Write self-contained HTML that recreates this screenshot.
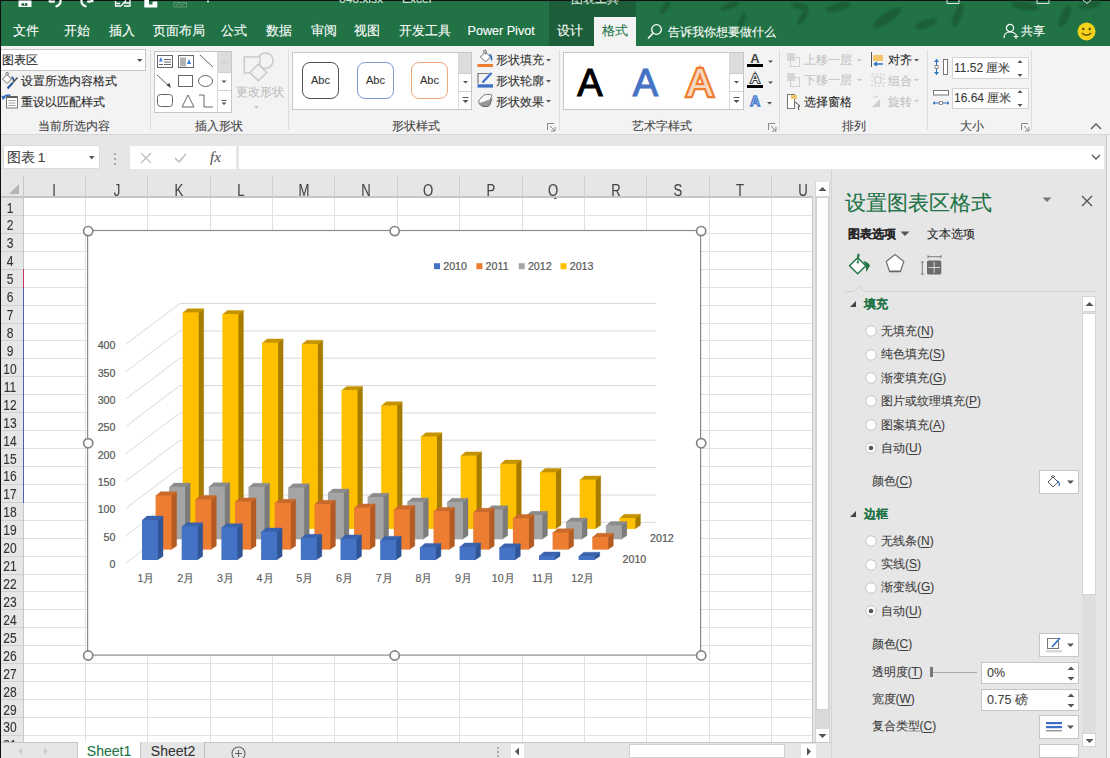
<!DOCTYPE html>
<html><head><meta charset="utf-8"><style>
html,body{margin:0;padding:0;width:1110px;height:758px;overflow:hidden;background:#fff;}
body{position:relative;font-family:"Liberation Sans",sans-serif;}
.r{position:absolute;}
.t{position:absolute;white-space:nowrap;-webkit-text-stroke:0.1px currentColor;}
u{text-decoration-thickness:1px;text-underline-offset:2px;}
</style></head><body>
<div class="r" style="left:0px;top:0px;width:1110px;height:46px;background:#217346"></div>
<div class="r" style="left:549px;top:0px;width:87px;height:46px;background:#1d5e3a"></div>
<div class="r" style="left:594px;top:17px;width:42px;height:30px;background:#f3f3f3"></div>
<div class="r" style="left:0px;top:0px;width:1110px;height:1px;background:#111"></div>
<svg class="r" style="left:0;top:0" width="240" height="12"><path d="M18.5 0.5 H31.5 V7 H18.5z" fill="#fff"/><rect x="21.5" y="3.3" width="6" height="2.4" fill="#1d5e3a"/><rect x="24" y="3.3" width="1" height="1.6" fill="#fff"/><g fill="none" stroke="#fff" stroke-width="2.2" stroke-linecap="round"><path d="M49.5 1.3 Q53 2 54 1.5"/><path d="M60.5 0.5 Q61 4.5 56.5 6.3"/><path d="M81.5 0.5 Q81 4.5 85.5 6.3"/><path d="M88 1.5 Q90 1.8 92.5 1"/></g><g fill="none" stroke="#fff" stroke-width="1.3"><path d="M115.5 1 V6 H121 M115.5 3.5 H120 M121 6 L126 0.5 M124 3 H130 M124 6 H130 V0"/></g><path d="M144.3 0 H149 V4.5 H152.5 V1.5 H157.3 V7.5 H144.3z" fill="#fff"/><rect x="174" y="2.5" width="12.5" height="4.5" fill="none" stroke="#5e9873" stroke-width="1"/><path d="M176 6 L179 3.5 L182 5.5 L185 3" fill="none" stroke="#5e9873"/><circle cx="208" cy="1.5" r="1" fill="#fff"/></svg>
<div class="t" style="left:339px;top:-9.0px;font-size:12px;line-height:17px;color:#cfe3d6;font-weight:normal;">046.xlsx</div>
<div class="t" style="left:402px;top:-9.0px;font-size:12px;line-height:17px;color:#cfe3d6;font-weight:normal;">Excel</div>
<div class="t" style="left:571px;top:-9.5px;font-size:12px;line-height:17px;color:#cfe3d6;font-weight:normal;">图表工具</div>
<svg class="r" style="left:0;top:0" width="1110" height="46"><defs><filter id="bl"><feGaussianBlur stdDeviation="1.2"/></filter></defs><g fill="#1a5c36" opacity="0.9" filter="url(#bl)"><ellipse cx="803" cy="17" rx="9" ry="3" transform="rotate(-60 803 17)"/><ellipse cx="838" cy="7" rx="13" ry="4" transform="rotate(-15 838 7)"/><ellipse cx="887" cy="18" rx="17" ry="5" transform="rotate(-35 887 18)"/><ellipse cx="926" cy="24" rx="12" ry="4" transform="rotate(-20 926 24)"/><ellipse cx="958" cy="15" rx="12" ry="4" transform="rotate(-70 958 15)"/><ellipse cx="1025" cy="6" rx="14" ry="4" transform="rotate(10 1025 6)"/><ellipse cx="1065" cy="16" rx="12" ry="4" transform="rotate(-65 1065 16)"/><ellipse cx="1090" cy="5" rx="12" ry="4" transform="rotate(-10 1090 5)"/><ellipse cx="665" cy="8" rx="8" ry="3" transform="rotate(-50 665 8)"/><ellipse cx="730" cy="6" rx="10" ry="3" transform="rotate(-20 730 6)"/><ellipse cx="742" cy="20" rx="8" ry="3" transform="rotate(-70 742 20)"/><ellipse cx="800" cy="6" rx="9" ry="3" transform="rotate(15 800 6)"/></g><g stroke="#d8e6dc" stroke-width="1" fill="none"><path d="M947 0 V3.5 H959 V0"/><path d="M1037 0 V3.5 H1049 V0"/><path d="M1083 0 L1087 3.5 L1091 0"/></g></svg>
<div class="t" style="left:13px;top:22.2px;font-size:12.6px;line-height:18px;color:#ffffff;font-weight:normal;">文件</div>
<div class="t" style="left:64px;top:22.2px;font-size:12.6px;line-height:18px;color:#ffffff;font-weight:normal;">开始</div>
<div class="t" style="left:109px;top:22.2px;font-size:12.6px;line-height:18px;color:#ffffff;font-weight:normal;">插入</div>
<div class="t" style="left:153px;top:22.2px;font-size:12.6px;line-height:18px;color:#ffffff;font-weight:normal;">页面布局</div>
<div class="t" style="left:221px;top:22.2px;font-size:12.6px;line-height:18px;color:#ffffff;font-weight:normal;">公式</div>
<div class="t" style="left:266px;top:22.2px;font-size:12.6px;line-height:18px;color:#ffffff;font-weight:normal;">数据</div>
<div class="t" style="left:310.5px;top:22.2px;font-size:12.6px;line-height:18px;color:#ffffff;font-weight:normal;">审阅</div>
<div class="t" style="left:354px;top:22.2px;font-size:12.6px;line-height:18px;color:#ffffff;font-weight:normal;">视图</div>
<div class="t" style="left:399px;top:22.2px;font-size:12.6px;line-height:18px;color:#ffffff;font-weight:normal;">开发工具</div>
<div class="t" style="left:467.5px;top:22.2px;font-size:12.6px;line-height:18px;color:#ffffff;font-weight:normal;">Power Pivot</div>
<div class="t" style="left:557px;top:22.2px;font-size:12.6px;line-height:18px;color:#ffffff;font-weight:normal;">设计</div>
<div class="t" style="left:602px;top:22.2px;font-size:12.6px;line-height:18px;color:#217346;font-weight:normal;">格式</div>
<svg class="r" style="left:646px;top:23px" width="18" height="18"><circle cx="10.5" cy="6.5" r="4.8" fill="none" stroke="#fff" stroke-width="1.3"/><path d="M7.2 10 L2 15.5" stroke="#fff" stroke-width="1.5"/></svg>
<div class="t" style="left:668px;top:23.5px;font-size:11.6px;line-height:16px;color:#ffffff;font-weight:normal;">告诉我你想要做什么</div>
<svg class="r" style="left:1003px;top:23px" width="18" height="17"><circle cx="7" cy="5" r="3.6" fill="none" stroke="#fff" stroke-width="1.2"/><path d="M1 15 Q1 9 7 9 Q11 9 12.5 11" fill="none" stroke="#fff" stroke-width="1.2"/><path d="M13 11 v5 M10.5 13.5 h5" stroke="#fff" stroke-width="1.2"/></svg>
<div class="t" style="left:1021px;top:23.0px;font-size:12px;line-height:17px;color:#ffffff;font-weight:normal;">共享</div>
<svg class="r" style="left:1076px;top:21px" width="21" height="21"><circle cx="10.5" cy="10.5" r="9" fill="#f5d21a"/><circle cx="7.3" cy="8" r="1.2" fill="#5a4a00"/><circle cx="13.7" cy="8" r="1.2" fill="#5a4a00"/><path d="M5.8 12 Q10.5 16.5 15.2 12" fill="none" stroke="#5a4a00" stroke-width="1.2"/></svg>
<div class="r" style="left:0px;top:46px;width:1110px;height:89px;background:#f3f3f3"></div>
<div class="r" style="left:0px;top:134px;width:1110px;height:1px;background:#d6d6d6"></div>
<div class="r" style="left:150px;top:50px;width:1px;height:80px;background:#dcdcdc"></div>
<div class="r" style="left:288px;top:50px;width:1px;height:80px;background:#dcdcdc"></div>
<div class="r" style="left:559px;top:50px;width:1px;height:80px;background:#dcdcdc"></div>
<div class="r" style="left:779px;top:50px;width:1px;height:80px;background:#dcdcdc"></div>
<div class="r" style="left:927px;top:50px;width:1px;height:80px;background:#dcdcdc"></div>
<div class="r" style="left:1031px;top:50px;width:1px;height:80px;background:#dcdcdc"></div>
<div class="r" style="left:0px;top:49px;width:146px;height:22px;background:#fff;border:1px solid #c6c6c6;box-sizing:border-box"></div>
<div class="t" style="left:2px;top:51.7px;font-size:12px;line-height:17px;color:#262626;font-weight:normal;">图表区</div>
<svg class="r" style="left:137px;top:59px" width="7" height="4"><path d="M0 0h5.5l-2.75 3z" fill="#555"/></svg>
<svg class="r" style="left:0px;top:70px" width="20" height="20"><path d="M2.5 9 l4.5 -4.5 l4.5 4.5 l-4.5 4.5z" fill="#fff" stroke="#666" stroke-width="1"/><path d="M5.5 4.5 q0.5 -3 2.5 -2 q1 1 -0.5 3" fill="none" stroke="#666" stroke-width="0.9"/><path d="M11.5 7 q2.5 1 2 4" fill="none" stroke="#2f5aa0" stroke-width="1.6"/><path d="M7.5 18.5 L12.5 13" stroke="#2f5aa0" stroke-width="2.2"/><path d="M12.5 13 L17.5 7.5" stroke="#555" stroke-width="1.6"/></svg>
<div class="t" style="left:21px;top:73.3px;font-size:12px;line-height:17px;color:#262626;font-weight:normal;">设置所选内容格式</div>
<svg class="r" style="left:0px;top:93px" width="20" height="18"><rect x="6.5" y="3.5" width="11" height="11.5" fill="#fff" stroke="#777"/><rect x="7" y="3.5" width="10" height="1.5" fill="#555"/><path d="M8.5 7.5h7M8.5 10h7M8.5 12.5h7" stroke="#999" stroke-width="0.9"/><path d="M10.5 2.5 q-3 -1.5 -7 1.5" fill="none" stroke="#2f6fc0" stroke-width="1.6"/><path d="M1.5 2.5 l1 4.5 l3.5 -2.5z" fill="#2f6fc0"/></svg>
<div class="t" style="left:21px;top:94.2px;font-size:12px;line-height:17px;color:#262626;font-weight:normal;">重设以匹配样式</div>
<div class="t" style="left:-76.5px;width:300px;text-align:center;top:118.1px;font-size:12px;line-height:17px;color:#444444;font-weight:normal;">当前所选内容</div>
<div class="r" style="left:154px;top:51px;width:78px;height:62px;background:#fff;border:1px solid #c6c6c6;box-sizing:border-box"></div>
<div class="r" style="left:217px;top:52px;width:14px;height:21px;background:#dcdcdc"></div>
<div class="r" style="left:217px;top:72px;width:14px;height:1px;background:#d0d0d0"></div>
<div class="r" style="left:217px;top:90px;width:14px;height:1px;background:#d0d0d0"></div>
<div class="r" style="left:217px;top:52px;width:1px;height:60px;background:#d8d8d8"></div>
<svg class="r" style="left:154px;top:51px" width="63" height="62"><g fill="none" stroke="#666" stroke-width="1"><rect x="3.5" y="4.5" width="15" height="12"/><path d="M10 8.5h7M10 11h7M10 13.5h7M5 13.5h4"/><rect x="24.5" y="4.5" width="15" height="12"/><path d="M27 6.5v9M29 6.5v9M31 6.5v9"/><path d="M46 4 L59 16"/><path d="M3 24 L16 36"/><rect x="24.5" y="24.5" width="14" height="11"/><ellipse cx="51.5" cy="30" rx="7" ry="5.5"/><rect x="3.5" y="43.5" width="15" height="12" rx="3"/><path d="M28 56 L34 44 L40 56z"/><path d="M45 44h5v12h9"/></g><path d="M5 10.5 l1.8 -4.5 l1.8 4.5z" fill="#3a7bd5"/><path d="M33 13 l2 -5 l2 5z" fill="#3a7bd5"/><path d="M12.5 34 l4.5 3 l-1.5 -5z" fill="#444"/></svg>
<svg class="r" style="left:217px;top:52px" width="14" height="60"><path d="M5 11.5 h4 l-2 -2z" fill="#c8c8c8"/><path d="M4.5 28.5 h5 l-2.5 2.5z" fill="#555"/><path d="M4.5 48.5 h5" stroke="#555"/><path d="M4.5 50.5 h5 l-2.5 2.5z" fill="#555"/></svg>
<svg class="r" style="left:236px;top:51px" width="44" height="33"><g fill="#f3f3f3" stroke="#cacaca" stroke-width="1.5"><circle cx="29.4" cy="9.7" r="7.7"/><rect x="8.3" y="5.9" width="15.7" height="16"/><path d="M22.3 13.1 L30.7 21.5 L22.3 29.9 L13.9 21.5z"/></g></svg>
<div class="t" style="left:236px;top:83.5px;font-size:12px;line-height:17px;color:#c0c0c0;font-weight:normal;">更改形状</div>
<svg class="r" style="left:254px;top:106px" width="6" height="4"><path d="M0 0h5l-2.5 3z" fill="#c8c8c8"/></svg>
<div class="t" style="left:69px;width:300px;text-align:center;top:118.1px;font-size:12px;line-height:17px;color:#444444;font-weight:normal;">插入形状</div>
<div class="r" style="left:292px;top:52px;width:180px;height:58px;background:#fff;border:1px solid #c6c6c6;box-sizing:border-box"></div>
<div class="r" style="left:458px;top:53px;width:13px;height:20px;background:#dcdcdc"></div>
<div class="r" style="left:458px;top:52px;width:1px;height:57px;background:#d8d8d8"></div>
<div class="r" style="left:458px;top:73px;width:13px;height:1px;background:#d0d0d0"></div>
<div class="r" style="left:458px;top:91px;width:13px;height:1px;background:#d0d0d0"></div>
<svg class="r" style="left:459px;top:52px" width="13" height="58"><path d="M4 29h5l-2.5 2.5z M3.5 46h6 M3.5 48h6l-3 3z" fill="#555" stroke="none"/><path d="M3.5 45.5h6" stroke="#555"/></svg>
<div class="r" style="left:302px;top:62px;width:37px;height:37px;border:1.6px solid #505050;border-radius:8px;box-sizing:border-box;background:#fff"></div>
<div class="t" style="left:170.5px;width:300px;text-align:center;top:72.5px;font-size:11px;line-height:15px;color:#333;font-weight:normal;">Abc</div>
<div class="r" style="left:357px;top:62px;width:37px;height:37px;border:1.4px solid #7b9ad6;border-radius:8px;box-sizing:border-box;background:#fff"></div>
<div class="t" style="left:225.5px;width:300px;text-align:center;top:72.5px;font-size:11px;line-height:15px;color:#333;font-weight:normal;">Abc</div>
<div class="r" style="left:411px;top:62px;width:37px;height:37px;border:1.4px solid #f0a878;border-radius:8px;box-sizing:border-box;background:#fff"></div>
<div class="t" style="left:279.5px;width:300px;text-align:center;top:72.5px;font-size:11px;line-height:15px;color:#333;font-weight:normal;">Abc</div>
<svg class="r" style="left:476px;top:48px" width="20" height="62"><path d="M4.5 9 l5 -5 l5 5 l-5 5z" fill="#fff" stroke="#666"/><path d="M7.5 4.5 q0 -3 2 -2.5 q1.5 0.5 0 4.5" fill="none" stroke="#666"/><path d="M13.5 6.5 q2.5 1 2 6" fill="none" stroke="#2f6fc0" stroke-width="1.6"/><rect x="1.5" y="16" width="15.5" height="3" fill="#ed7d31"/><path d="M2 35.5 V25.5 H13" fill="none" stroke="#777" stroke-width="1.2"/><path d="M6.5 34.5 l9 -9.5" stroke="#3a6fc5" stroke-width="2.2"/><rect x="1.5" y="36.3" width="15.5" height="3.3" fill="#3a6fc5"/><path d="M3 55 q-1 -2 0.5 -3.5 l4 -4 q1 -1 3 -1 h4 q2 0 1 2 l-2 5 q-1 2 -3 2.5z" fill="#f8f8f8" stroke="#777" stroke-width="1"/><path d="M3 55.5 q2 3 5 3 h3 q2 0 3 -2 l2 -6" fill="#999" stroke="#666" stroke-width="1"/></svg>
<div class="t" style="left:495.5px;top:52.2px;font-size:11.6px;line-height:16px;color:#333;font-weight:normal;">形状填充</div>
<div class="t" style="left:495.5px;top:73.4px;font-size:11.6px;line-height:16px;color:#333;font-weight:normal;">形状轮廓</div>
<div class="t" style="left:495.5px;top:93.7px;font-size:11.6px;line-height:16px;color:#333;font-weight:normal;">形状效果</div>
<svg class="r" style="left:546px;top:58px" width="6" height="48"><path d="M0 1h5l-2.5 2.5z M0 22h5l-2.5 2.5z M0 42h5l-2.5 2.5z" fill="#555"/></svg>
<div class="t" style="left:266px;width:300px;text-align:center;top:118.1px;font-size:12px;line-height:17px;color:#444444;font-weight:normal;">形状样式</div>
<svg class="r" style="left:547px;top:123px" width="9" height="9"><path d="M0.5 7 V0.5 H7" fill="none" stroke="#888"/><path d="M3 3 l5 5 M8 4 v4 h-4" fill="none" stroke="#888"/></svg>
<div class="r" style="left:563px;top:52px;width:181px;height:58px;background:#fff;border:1px solid #c6c6c6;box-sizing:border-box"></div>
<div class="r" style="left:729px;top:53px;width:14px;height:20px;background:#dcdcdc"></div>
<div class="r" style="left:729px;top:52px;width:1px;height:57px;background:#d8d8d8"></div>
<div class="r" style="left:729px;top:73px;width:14px;height:1px;background:#d0d0d0"></div>
<div class="r" style="left:729px;top:91px;width:14px;height:1px;background:#d0d0d0"></div>
<svg class="r" style="left:729px;top:52px" width="15" height="58"><path d="M5 29h5l-2.5 2.5z M4.5 48h6l-3 3z" fill="#555"/><path d="M4.5 45.5h6" stroke="#555"/></svg>
<svg class="r" style="left:563px;top:52px" width="166" height="58" style="overflow:visible"><g font-family="Liberation Sans" font-size="38" text-anchor="middle"><text x="27" y="43.7" fill="#000" stroke="#000" stroke-width="1.1">A</text><text x="82.5" y="43.7" fill="#4472c4" stroke="#4472c4" stroke-width="1.1">A</text><text x="137" y="43.7" fill="#f6d9c0" stroke="#ed7d31" stroke-width="4.5" paint-order="stroke">A</text></g></svg>
<svg class="r" style="left:745px;top:50px" width="32" height="60" font-family="Liberation Sans" font-weight="bold"><text x="10" y="12.5" font-size="13" text-anchor="middle" fill="#444">A</text><rect x="2" y="14" width="16" height="3" fill="#000"/><text x="10" y="33" font-size="13" text-anchor="middle" font-weight="normal" fill="#fff" stroke="#444" stroke-width="2.2" paint-order="stroke">A</text><rect x="2" y="35" width="16" height="3" fill="#000"/><text x="10" y="55.5" font-size="14" text-anchor="middle" fill="#e3ecf9" stroke="#4a7fd0" stroke-width="1.3">A</text><path d="M23 10.5h5l-2.5 2.5z M23 31.5h5l-2.5 2.5z M22 52h5l-2.5 2.5z" fill="#555"/></svg>
<div class="t" style="left:512px;width:300px;text-align:center;top:118.1px;font-size:12px;line-height:17px;color:#444444;font-weight:normal;">艺术字样式</div>
<svg class="r" style="left:768px;top:123px" width="9" height="9"><path d="M0.5 7 V0.5 H7" fill="none" stroke="#888"/><path d="M3 3 l5 5 M8 4 v4 h-4" fill="none" stroke="#888"/></svg>
<svg class="r" style="left:786px;top:52px" width="16" height="60"><rect x="1" y="1" width="8" height="8" fill="#d8d8d8"/><rect x="4.5" y="5.5" width="9" height="9" fill="none" stroke="#d0d0d0"/><rect x="1" y="21" width="8" height="8" fill="#d8d8d8"/><rect x="4.5" y="25.5" width="9" height="9" fill="none" stroke="#d0d0d0"/><rect x="1.5" y="42.5" width="7" height="14" fill="#fff" stroke="#777"/><rect x="5" y="43" width="6" height="4" fill="#f2c46c"/><path d="M9 50 l5 4 l-2 1 l1 3" fill="#fff" stroke="#444"/></svg>
<div class="t" style="left:804px;top:51.5px;font-size:12px;line-height:17px;color:#c2c2c2;font-weight:normal;">上移一层</div>
<div class="t" style="left:804px;top:72.0px;font-size:12px;line-height:17px;color:#c2c2c2;font-weight:normal;">下移一层</div>
<div class="t" style="left:804px;top:93.5px;font-size:12px;line-height:17px;color:#262626;font-weight:normal;">选择窗格</div>
<svg class="r" style="left:857px;top:58px" width="6" height="26"><path d="M0 1h5l-2.5 2.5z M0 21h5l-2.5 2.5z" fill="#c8c8c8"/></svg>
<svg class="r" style="left:870px;top:51px" width="16" height="60"><path d="M1.5 1 v15" stroke="#555"/><rect x="3" y="4" width="10" height="6" fill="#f2c46c"/><path d="M4 13 h9 M4 13 l3 -2 M4 13 l3 2" fill="none" stroke="#2f6fc0" stroke-width="1.3"/><rect x="2" y="23" width="12" height="12" fill="none" stroke="#c8c8c8" stroke-dasharray="2 2"/><rect x="5" y="26" width="6" height="6" fill="none" stroke="#c8c8c8"/><path d="M2 56 l8 -8 v8z" fill="#d0d0d0"/><path d="M3 47 q2 -3 5 -1" fill="none" stroke="#d0d0d0"/></svg>
<div class="t" style="left:888px;top:51.5px;font-size:12px;line-height:17px;color:#262626;font-weight:normal;">对齐</div>
<div class="t" style="left:888px;top:72.7px;font-size:12px;line-height:17px;color:#c2c2c2;font-weight:normal;">组合</div>
<div class="t" style="left:888px;top:93.5px;font-size:12px;line-height:17px;color:#c2c2c2;font-weight:normal;">旋转</div>
<svg class="r" style="left:914px;top:58px" width="6" height="48"><path d="M0 1h5l-2.5 2.5z" fill="#555"/><path d="M0 21h5l-2.5 2.5z M0 42h5l-2.5 2.5z" fill="#c8c8c8"/></svg>
<div class="t" style="left:704px;width:300px;text-align:center;top:118.1px;font-size:12px;line-height:17px;color:#444444;font-weight:normal;">排列</div>
<svg class="r" style="left:932px;top:57px" width="18" height="52"><path d="M4.5 2 v16" stroke="#2f6fc0" stroke-width="1"/><path d="M2 5 l2.5 -3 l2.5 3z M2 15 l2.5 3 l2.5 -3z" fill="#2f6fc0"/><rect x="3" y="8.5" width="3" height="3" fill="#fff" stroke="#777" stroke-width="0.8"/><rect x="11.5" y="2.5" width="4" height="15" fill="#fff" stroke="#777"/><rect x="1.5" y="33.5" width="15" height="4.5" fill="#fff" stroke="#777"/><path d="M1 46 h16" stroke="#2f6fc0"/><path d="M3 44 l-2 2 l2 2z M15 44 l2 2 l-2 2z" fill="#2f6fc0"/><rect x="7.5" y="44.5" width="3" height="3" fill="#fff" stroke="#777" stroke-width="0.8"/></svg>
<div class="r" style="left:952px;top:57px;width:77px;height:22px;background:#fff;border:1px solid #d4d4d4;box-sizing:border-box"></div>
<div class="r" style="left:952px;top:88px;width:77px;height:21px;background:#fff;border:1px solid #d4d4d4;box-sizing:border-box"></div>
<div class="t" style="left:954px;top:59.5px;font-size:12px;line-height:17px;color:#3a3a3a;font-weight:normal;">11.52 厘米</div>
<div class="t" style="left:954px;top:89.5px;font-size:12px;line-height:17px;color:#3a3a3a;font-weight:normal;">16.64 厘米</div>
<svg class="r" style="left:1017px;top:59px" width="7" height="48"><path d="M0.5 4 l2.5 -3 l2.5 3z M0.5 15 l2.5 3 l2.5 -3z M0.5 34 l2.5 -3 l2.5 3z M0.5 45 l2.5 3 l2.5 -3z" fill="#555"/></svg>
<div class="t" style="left:822px;width:300px;text-align:center;top:118.3px;font-size:12px;line-height:17px;color:#444444;font-weight:normal;">大小</div>
<svg class="r" style="left:1021px;top:123px" width="9" height="9"><path d="M0.5 7 V0.5 H7" fill="none" stroke="#888"/><path d="M3 3 l5 5 M8 4 v4 h-4" fill="none" stroke="#888"/></svg>
<svg class="r" style="left:1090px;top:123px" width="12" height="8"><path d="M1 6 l5 -5 l5 5" fill="none" stroke="#555" stroke-width="1.3"/></svg>
<div class="r" style="left:0px;top:135px;width:1110px;height:623px;background:#e6e6e6"></div>
<div class="r" style="left:3px;top:145px;width:97px;height:24px;background:#fff;border:1px solid #dcdcdc;box-sizing:border-box"></div>
<div class="t" style="left:7px;top:148.0px;font-size:13.6px;line-height:19px;color:#404040;font-weight:normal;">图表<span style="margin-left:2.8px">1</span></div>
<svg class="r" style="left:89px;top:156px" width="7" height="5"><path d="M0 0h5.5l-2.75 3.5z" fill="#555"/></svg>
<svg class="r" style="left:113px;top:152px" width="4" height="14"><circle cx="2" cy="2" r="1" fill="#999"/><circle cx="2" cy="7" r="1" fill="#999"/><circle cx="2" cy="12" r="1" fill="#999"/></svg>
<div class="r" style="left:130px;top:146px;width:106px;height:23px;background:#fff"></div>
<svg class="r" style="left:140px;top:151px" width="100" height="14"><path d="M1 2 l10 10 M11 2 l-10 10" stroke="#bdbdbd" stroke-width="1.2"/><path d="M35 7 l4 4 l7 -8" fill="none" stroke="#bdbdbd" stroke-width="1.5"/></svg>
<div class="t" style="left:210px;top:147.0px;font-size:15px;line-height:21px;color:#555;font-weight:normal;font-family:'Liberation Serif',serif;"><i>fx</i></div>
<div class="r" style="left:239px;top:146px;width:865px;height:23px;background:#fff"></div>
<svg class="r" style="left:1091px;top:154px" width="10" height="7"><path d="M1 1 l4 4 l4 -4" fill="none" stroke="#555" stroke-width="1.3"/></svg>
<div class="r" style="left:23px;top:197px;width:790px;height:545px;background:#fff"></div>
<svg class="r" style="left:23px;top:197px" width="790" height="545"><rect x="62" y="0" width="1" height="545" fill="#e1e1e1"/><rect x="124" y="0" width="1" height="545" fill="#e1e1e1"/><rect x="187" y="0" width="1" height="545" fill="#e1e1e1"/><rect x="249" y="0" width="1" height="545" fill="#e1e1e1"/><rect x="311" y="0" width="1" height="545" fill="#e1e1e1"/><rect x="374" y="0" width="1" height="545" fill="#e1e1e1"/><rect x="436" y="0" width="1" height="545" fill="#e1e1e1"/><rect x="499" y="0" width="1" height="545" fill="#e1e1e1"/><rect x="561" y="0" width="1" height="545" fill="#e1e1e1"/><rect x="623" y="0" width="1" height="545" fill="#e1e1e1"/><rect x="686" y="0" width="1" height="545" fill="#e1e1e1"/><rect x="748" y="0" width="1" height="545" fill="#e1e1e1"/><rect x="0" y="18" width="790" height="1" fill="#e1e1e1"/><rect x="0" y="36" width="790" height="1" fill="#e1e1e1"/><rect x="0" y="54" width="790" height="1" fill="#e1e1e1"/><rect x="0" y="72" width="790" height="1" fill="#e1e1e1"/><rect x="0" y="90" width="790" height="1" fill="#e1e1e1"/><rect x="0" y="108" width="790" height="1" fill="#e1e1e1"/><rect x="0" y="126" width="790" height="1" fill="#e1e1e1"/><rect x="0" y="143" width="790" height="1" fill="#e1e1e1"/><rect x="0" y="161" width="790" height="1" fill="#e1e1e1"/><rect x="0" y="179" width="790" height="1" fill="#e1e1e1"/><rect x="0" y="197" width="790" height="1" fill="#e1e1e1"/><rect x="0" y="215" width="790" height="1" fill="#e1e1e1"/><rect x="0" y="233" width="790" height="1" fill="#e1e1e1"/><rect x="0" y="251" width="790" height="1" fill="#e1e1e1"/><rect x="0" y="269" width="790" height="1" fill="#e1e1e1"/><rect x="0" y="287" width="790" height="1" fill="#e1e1e1"/><rect x="0" y="305" width="790" height="1" fill="#e1e1e1"/><rect x="0" y="323" width="790" height="1" fill="#e1e1e1"/><rect x="0" y="341" width="790" height="1" fill="#e1e1e1"/><rect x="0" y="359" width="790" height="1" fill="#e1e1e1"/><rect x="0" y="377" width="790" height="1" fill="#e1e1e1"/><rect x="0" y="394" width="790" height="1" fill="#e1e1e1"/><rect x="0" y="412" width="790" height="1" fill="#e1e1e1"/><rect x="0" y="430" width="790" height="1" fill="#e1e1e1"/><rect x="0" y="448" width="790" height="1" fill="#e1e1e1"/><rect x="0" y="466" width="790" height="1" fill="#e1e1e1"/><rect x="0" y="484" width="790" height="1" fill="#e1e1e1"/><rect x="0" y="502" width="790" height="1" fill="#e1e1e1"/><rect x="0" y="520" width="790" height="1" fill="#e1e1e1"/><rect x="0" y="538" width="790" height="1" fill="#e1e1e1"/></svg>
<div class="r" style="left:812px;top:197px;width:1px;height:545px;background:#c8c8c8"></div>
<div class="t" style="left:-95.68px;width:300px;text-align:center;top:179.6px;font-size:16px;line-height:22px;color:#444;font-weight:normal;transform:scaleX(0.82);">I</div>
<div class="r" style="left:85px;top:176px;width:1px;height:21px;background:#d0d0d0"></div>
<div class="t" style="left:-33.31999999999999px;width:300px;text-align:center;top:179.6px;font-size:16px;line-height:22px;color:#444;font-weight:normal;transform:scaleX(0.82);">J</div>
<div class="r" style="left:147px;top:176px;width:1px;height:21px;background:#d0d0d0"></div>
<div class="t" style="left:29.04000000000002px;width:300px;text-align:center;top:179.6px;font-size:16px;line-height:22px;color:#444;font-weight:normal;transform:scaleX(0.82);">K</div>
<div class="r" style="left:210px;top:176px;width:1px;height:21px;background:#d0d0d0"></div>
<div class="t" style="left:91.4px;width:300px;text-align:center;top:179.6px;font-size:16px;line-height:22px;color:#444;font-weight:normal;transform:scaleX(0.82);">L</div>
<div class="r" style="left:272px;top:176px;width:1px;height:21px;background:#d0d0d0"></div>
<div class="t" style="left:153.76px;width:300px;text-align:center;top:179.6px;font-size:16px;line-height:22px;color:#444;font-weight:normal;transform:scaleX(0.82);">M</div>
<div class="r" style="left:334px;top:176px;width:1px;height:21px;background:#d0d0d0"></div>
<div class="t" style="left:216.12px;width:300px;text-align:center;top:179.6px;font-size:16px;line-height:22px;color:#444;font-weight:normal;transform:scaleX(0.82);">N</div>
<div class="r" style="left:397px;top:176px;width:1px;height:21px;background:#d0d0d0"></div>
<div class="t" style="left:278.48px;width:300px;text-align:center;top:179.6px;font-size:16px;line-height:22px;color:#444;font-weight:normal;transform:scaleX(0.82);">O</div>
<div class="r" style="left:459px;top:176px;width:1px;height:21px;background:#d0d0d0"></div>
<div class="t" style="left:340.84px;width:300px;text-align:center;top:179.6px;font-size:16px;line-height:22px;color:#444;font-weight:normal;transform:scaleX(0.82);">P</div>
<div class="r" style="left:522px;top:176px;width:1px;height:21px;background:#d0d0d0"></div>
<div class="t" style="left:403.19999999999993px;width:300px;text-align:center;top:179.6px;font-size:16px;line-height:22px;color:#444;font-weight:normal;transform:scaleX(0.82);">Q</div>
<div class="r" style="left:584px;top:176px;width:1px;height:21px;background:#d0d0d0"></div>
<div class="t" style="left:465.55999999999995px;width:300px;text-align:center;top:179.6px;font-size:16px;line-height:22px;color:#444;font-weight:normal;transform:scaleX(0.82);">R</div>
<div class="r" style="left:646px;top:176px;width:1px;height:21px;background:#d0d0d0"></div>
<div class="t" style="left:527.92px;width:300px;text-align:center;top:179.6px;font-size:16px;line-height:22px;color:#444;font-weight:normal;transform:scaleX(0.82);">S</div>
<div class="r" style="left:709px;top:176px;width:1px;height:21px;background:#d0d0d0"></div>
<div class="t" style="left:590.28px;width:300px;text-align:center;top:179.6px;font-size:16px;line-height:22px;color:#444;font-weight:normal;transform:scaleX(0.82);">T</div>
<div class="r" style="left:771px;top:176px;width:1px;height:21px;background:#d0d0d0"></div>
<div class="t" style="left:652.64px;width:300px;text-align:center;top:179.6px;font-size:16px;line-height:22px;color:#444;font-weight:normal;transform:scaleX(0.82);">U</div>
<div class="r" style="left:0px;top:196px;width:813px;height:1.5px;background:#c6c6c6"></div>
<div class="r" style="left:23px;top:176px;width:1px;height:566px;background:#c6c6c6"></div>
<svg class="r" style="left:8px;top:183px" width="12" height="12"><path d="M11 1 V11 H1z" fill="#b5b5b5"/></svg>
<div class="t" style="left:-139.6px;width:300px;text-align:center;top:197.5px;font-size:14.5px;line-height:20px;color:#333;font-weight:normal;transform:scaleX(0.83);">1</div>
<div class="r" style="left:1px;top:215px;width:22px;height:1px;background:#d0d0d0"></div>
<div class="t" style="left:-139.6px;width:300px;text-align:center;top:215.4px;font-size:14.5px;line-height:20px;color:#333;font-weight:normal;transform:scaleX(0.83);">2</div>
<div class="r" style="left:1px;top:233px;width:22px;height:1px;background:#d0d0d0"></div>
<div class="t" style="left:-139.6px;width:300px;text-align:center;top:233.3px;font-size:14.5px;line-height:20px;color:#333;font-weight:normal;transform:scaleX(0.83);">3</div>
<div class="r" style="left:1px;top:251px;width:22px;height:1px;background:#d0d0d0"></div>
<div class="t" style="left:-139.6px;width:300px;text-align:center;top:251.3px;font-size:14.5px;line-height:20px;color:#333;font-weight:normal;transform:scaleX(0.83);">4</div>
<div class="r" style="left:1px;top:269px;width:22px;height:1px;background:#d0d0d0"></div>
<div class="t" style="left:-139.6px;width:300px;text-align:center;top:269.2px;font-size:14.5px;line-height:20px;color:#333;font-weight:normal;transform:scaleX(0.83);">5</div>
<div class="r" style="left:1px;top:287px;width:22px;height:1px;background:#d0d0d0"></div>
<div class="t" style="left:-139.6px;width:300px;text-align:center;top:287.1px;font-size:14.5px;line-height:20px;color:#333;font-weight:normal;transform:scaleX(0.83);">6</div>
<div class="r" style="left:1px;top:305px;width:22px;height:1px;background:#d0d0d0"></div>
<div class="t" style="left:-139.6px;width:300px;text-align:center;top:305.0px;font-size:14.5px;line-height:20px;color:#333;font-weight:normal;transform:scaleX(0.83);">7</div>
<div class="r" style="left:1px;top:323px;width:22px;height:1px;background:#d0d0d0"></div>
<div class="t" style="left:-139.6px;width:300px;text-align:center;top:323.0px;font-size:14.5px;line-height:20px;color:#333;font-weight:normal;transform:scaleX(0.83);">8</div>
<div class="r" style="left:1px;top:340px;width:22px;height:1px;background:#d0d0d0"></div>
<div class="t" style="left:-139.6px;width:300px;text-align:center;top:340.9px;font-size:14.5px;line-height:20px;color:#333;font-weight:normal;transform:scaleX(0.83);">9</div>
<div class="r" style="left:1px;top:358px;width:22px;height:1px;background:#d0d0d0"></div>
<div class="t" style="left:-139.6px;width:300px;text-align:center;top:358.8px;font-size:14.5px;line-height:20px;color:#333;font-weight:normal;transform:scaleX(0.83);">10</div>
<div class="r" style="left:1px;top:376px;width:22px;height:1px;background:#d0d0d0"></div>
<div class="t" style="left:-139.6px;width:300px;text-align:center;top:376.8px;font-size:14.5px;line-height:20px;color:#333;font-weight:normal;transform:scaleX(0.83);">11</div>
<div class="r" style="left:1px;top:394px;width:22px;height:1px;background:#d0d0d0"></div>
<div class="t" style="left:-139.6px;width:300px;text-align:center;top:394.7px;font-size:14.5px;line-height:20px;color:#333;font-weight:normal;transform:scaleX(0.83);">12</div>
<div class="r" style="left:1px;top:412px;width:22px;height:1px;background:#d0d0d0"></div>
<div class="t" style="left:-139.6px;width:300px;text-align:center;top:412.6px;font-size:14.5px;line-height:20px;color:#333;font-weight:normal;transform:scaleX(0.83);">13</div>
<div class="r" style="left:1px;top:430px;width:22px;height:1px;background:#d0d0d0"></div>
<div class="t" style="left:-139.6px;width:300px;text-align:center;top:430.6px;font-size:14.5px;line-height:20px;color:#333;font-weight:normal;transform:scaleX(0.83);">14</div>
<div class="r" style="left:1px;top:448px;width:22px;height:1px;background:#d0d0d0"></div>
<div class="t" style="left:-139.6px;width:300px;text-align:center;top:448.5px;font-size:14.5px;line-height:20px;color:#333;font-weight:normal;transform:scaleX(0.83);">15</div>
<div class="r" style="left:1px;top:466px;width:22px;height:1px;background:#d0d0d0"></div>
<div class="t" style="left:-139.6px;width:300px;text-align:center;top:466.4px;font-size:14.5px;line-height:20px;color:#333;font-weight:normal;transform:scaleX(0.83);">16</div>
<div class="r" style="left:1px;top:484px;width:22px;height:1px;background:#d0d0d0"></div>
<div class="t" style="left:-139.6px;width:300px;text-align:center;top:484.3px;font-size:14.5px;line-height:20px;color:#333;font-weight:normal;transform:scaleX(0.83);">17</div>
<div class="r" style="left:1px;top:502px;width:22px;height:1px;background:#d0d0d0"></div>
<div class="t" style="left:-139.6px;width:300px;text-align:center;top:502.3px;font-size:14.5px;line-height:20px;color:#333;font-weight:normal;transform:scaleX(0.83);">18</div>
<div class="r" style="left:1px;top:520px;width:22px;height:1px;background:#d0d0d0"></div>
<div class="t" style="left:-139.6px;width:300px;text-align:center;top:520.2px;font-size:14.5px;line-height:20px;color:#333;font-weight:normal;transform:scaleX(0.83);">19</div>
<div class="r" style="left:1px;top:538px;width:22px;height:1px;background:#d0d0d0"></div>
<div class="t" style="left:-139.6px;width:300px;text-align:center;top:538.1px;font-size:14.5px;line-height:20px;color:#333;font-weight:normal;transform:scaleX(0.83);">20</div>
<div class="r" style="left:1px;top:556px;width:22px;height:1px;background:#d0d0d0"></div>
<div class="t" style="left:-139.6px;width:300px;text-align:center;top:556.1px;font-size:14.5px;line-height:20px;color:#333;font-weight:normal;transform:scaleX(0.83);">21</div>
<div class="r" style="left:1px;top:574px;width:22px;height:1px;background:#d0d0d0"></div>
<div class="t" style="left:-139.6px;width:300px;text-align:center;top:574.0px;font-size:14.5px;line-height:20px;color:#333;font-weight:normal;transform:scaleX(0.83);">22</div>
<div class="r" style="left:1px;top:591px;width:22px;height:1px;background:#d0d0d0"></div>
<div class="t" style="left:-139.6px;width:300px;text-align:center;top:591.9px;font-size:14.5px;line-height:20px;color:#333;font-weight:normal;transform:scaleX(0.83);">23</div>
<div class="r" style="left:1px;top:609px;width:22px;height:1px;background:#d0d0d0"></div>
<div class="t" style="left:-139.6px;width:300px;text-align:center;top:609.9px;font-size:14.5px;line-height:20px;color:#333;font-weight:normal;transform:scaleX(0.83);">24</div>
<div class="r" style="left:1px;top:627px;width:22px;height:1px;background:#d0d0d0"></div>
<div class="t" style="left:-139.6px;width:300px;text-align:center;top:627.8px;font-size:14.5px;line-height:20px;color:#333;font-weight:normal;transform:scaleX(0.83);">25</div>
<div class="r" style="left:1px;top:645px;width:22px;height:1px;background:#d0d0d0"></div>
<div class="t" style="left:-139.6px;width:300px;text-align:center;top:645.7px;font-size:14.5px;line-height:20px;color:#333;font-weight:normal;transform:scaleX(0.83);">26</div>
<div class="r" style="left:1px;top:663px;width:22px;height:1px;background:#d0d0d0"></div>
<div class="t" style="left:-139.6px;width:300px;text-align:center;top:663.6px;font-size:14.5px;line-height:20px;color:#333;font-weight:normal;transform:scaleX(0.83);">27</div>
<div class="r" style="left:1px;top:681px;width:22px;height:1px;background:#d0d0d0"></div>
<div class="t" style="left:-139.6px;width:300px;text-align:center;top:681.6px;font-size:14.5px;line-height:20px;color:#333;font-weight:normal;transform:scaleX(0.83);">28</div>
<div class="r" style="left:1px;top:699px;width:22px;height:1px;background:#d0d0d0"></div>
<div class="t" style="left:-139.6px;width:300px;text-align:center;top:699.5px;font-size:14.5px;line-height:20px;color:#333;font-weight:normal;transform:scaleX(0.83);">29</div>
<div class="r" style="left:1px;top:717px;width:22px;height:1px;background:#d0d0d0"></div>
<div class="t" style="left:-139.6px;width:300px;text-align:center;top:717.4px;font-size:14.5px;line-height:20px;color:#333;font-weight:normal;transform:scaleX(0.83);">30</div>
<div class="r" style="left:1px;top:735px;width:22px;height:1px;background:#d0d0d0"></div>
<div class="t" style="left:-139.6px;width:300px;text-align:center;top:735.4px;font-size:14.5px;line-height:20px;color:#333;font-weight:normal;transform:scaleX(0.83);">31</div>
<div class="r" style="left:1px;top:753px;width:22px;height:1px;background:#d0d0d0"></div>
<div class="r" style="left:23px;top:269px;width:1px;height:19px;background:#c0395a"></div>
<div class="r" style="left:23px;top:288px;width:1px;height:215px;background:#4a62b0"></div>
<div class="r" style="left:815px;top:182px;width:15px;height:560px;background:#d9d9d9;border:1px solid #d4d4d4;box-sizing:border-box"></div>
<div class="r" style="left:816px;top:182px;width:13px;height:14px;background:#fff"></div>
<svg class="r" style="left:818px;top:186px" width="9" height="6"><path d="M0.5 5 l4 -4 l4 4z" fill="#555"/></svg>
<div class="r" style="left:816px;top:197px;width:13px;height:513px;background:#fff;border:1px solid #d0d0d0;box-sizing:border-box"></div>
<div class="r" style="left:816px;top:729px;width:13px;height:13px;background:#fff"></div>
<svg class="r" style="left:818px;top:733px" width="9" height="6"><path d="M0.5 1 l4 4 l4 -4z" fill="#555"/></svg>
<div class="r" style="left:0px;top:742px;width:832px;height:16px;background:#e6e6e6"></div>
<div class="r" style="left:0px;top:742px;width:832px;height:1px;background:#c6c6c6"></div>
<svg class="r" style="left:16px;top:746px" width="36" height="10"><path d="M6 1 l-4 4 l4 4z M28 1 l4 4 l-4 4z" fill="#cdcdcd"/></svg>
<div class="r" style="left:77px;top:742px;width:64px;height:16px;background:#fff;border-left:1px solid #c6c6c6;border-right:1px solid #c6c6c6;box-sizing:border-box"></div>
<div class="t" style="left:-41px;width:300px;text-align:center;top:741.0px;font-size:14px;line-height:20px;color:#217346;font-weight:normal;">Sheet1</div>
<div class="r" style="left:141px;top:742px;width:64px;height:16px;background:#e6e6e6;border-right:1px solid #bdbdbd;box-sizing:border-box"></div>
<div class="t" style="left:23px;width:300px;text-align:center;top:741.0px;font-size:14px;line-height:20px;color:#333;font-weight:normal;">Sheet2</div>
<svg class="r" style="left:230px;top:745px" width="18" height="14"><circle cx="8.5" cy="8.5" r="6.5" fill="none" stroke="#666" stroke-width="1.1"/><path d="M8.5 5 v7 M5 8.5 h7" stroke="#666" stroke-width="1.1"/></svg>
<svg class="r" style="left:496px;top:746px" width="4" height="12"><circle cx="2" cy="2" r="1" fill="#999"/><circle cx="2" cy="6" r="1" fill="#999"/><circle cx="2" cy="10" r="1" fill="#999"/></svg>
<div class="r" style="left:511px;top:744px;width:13px;height:14px;background:#fff"></div>
<svg class="r" style="left:514px;top:747px" width="7" height="9"><path d="M5 0.5 l-4 4 l4 4z" fill="#555"/></svg>
<div class="r" style="left:629px;top:744px;width:156px;height:14px;background:#fff;border:1px solid #d0d0d0;box-sizing:border-box"></div>
<div class="r" style="left:801px;top:744px;width:15px;height:14px;background:#fff"></div>
<svg class="r" style="left:806px;top:747px" width="7" height="9"><path d="M1 0.5 l4 4 l-4 4z" fill="#555"/></svg>
<svg class="r" style="left:0;top:0" width="1110" height="758" font-family="Liberation Sans"><rect x="87.6" y="230.5" width="613" height="424.6" fill="#fff" stroke="#8c8c8c" stroke-width="1.2"/><path d="M125.5 344.5 L180 303.5 H656" fill="none" stroke="#d9d9d9" stroke-width="1"/><path d="M125.5 371.9 L180 330.9 H656" fill="none" stroke="#d9d9d9" stroke-width="1"/><path d="M125.5 399.2 L180 358.2 H656" fill="none" stroke="#d9d9d9" stroke-width="1"/><path d="M125.5 426.6 L180 385.6 H656" fill="none" stroke="#d9d9d9" stroke-width="1"/><path d="M125.5 453.9 L180 412.9 H656" fill="none" stroke="#d9d9d9" stroke-width="1"/><path d="M125.5 481.2 L180 440.2 H656" fill="none" stroke="#d9d9d9" stroke-width="1"/><path d="M125.5 508.6 L180 467.6 H656" fill="none" stroke="#d9d9d9" stroke-width="1"/><path d="M125.5 536.0 L180 495.0 H656" fill="none" stroke="#d9d9d9" stroke-width="1"/><path d="M125.5 563.3 L180 522.3 H656" fill="none" stroke="#d9d9d9" stroke-width="1"/><text x="115.5" y="349.1" font-size="10.7" fill="#595959" stroke="#595959" stroke-width="0.22" text-anchor="end">400</text><text x="115.5" y="376.5" font-size="10.7" fill="#595959" stroke="#595959" stroke-width="0.22" text-anchor="end">350</text><text x="115.5" y="403.8" font-size="10.7" fill="#595959" stroke="#595959" stroke-width="0.22" text-anchor="end">300</text><text x="115.5" y="431.2" font-size="10.7" fill="#595959" stroke="#595959" stroke-width="0.22" text-anchor="end">250</text><text x="115.5" y="458.5" font-size="10.7" fill="#595959" stroke="#595959" stroke-width="0.22" text-anchor="end">200</text><text x="115.5" y="485.9" font-size="10.7" fill="#595959" stroke="#595959" stroke-width="0.22" text-anchor="end">150</text><text x="115.5" y="513.2" font-size="10.7" fill="#595959" stroke="#595959" stroke-width="0.22" text-anchor="end">100</text><text x="115.5" y="540.6" font-size="10.7" fill="#595959" stroke="#595959" stroke-width="0.22" text-anchor="end">50</text><text x="115.5" y="567.9" font-size="10.7" fill="#595959" stroke="#595959" stroke-width="0.22" text-anchor="end">0</text><path d="M198.1 528.9 L203.7 525.2 L203.7 308.7 L198.1 312.4z" fill="#a67c00" stroke="#a67c00" stroke-width="0.4"/><path d="M182.7 313.0 L187.7 308.7 L203.7 308.7 L198.7 313.0z" fill="#c49300" stroke="#c49300" stroke-width="0.4"/><rect x="182.7" y="312.4" width="16" height="216.5" fill="#ffc000"/><path d="M237.8 528.9 L243.4 525.2 L243.4 310.4 L237.8 314.1z" fill="#a67c00" stroke="#a67c00" stroke-width="0.4"/><path d="M222.4 314.7 L227.4 310.4 L243.4 310.4 L238.4 314.7z" fill="#c49300" stroke="#c49300" stroke-width="0.4"/><rect x="222.4" y="314.1" width="16" height="214.8" fill="#ffc000"/><path d="M277.5 528.9 L283.1 525.2 L283.1 338.9 L277.5 342.6z" fill="#a67c00" stroke="#a67c00" stroke-width="0.4"/><path d="M262.1 343.2 L267.1 338.9 L283.1 338.9 L278.1 343.2z" fill="#c49300" stroke="#c49300" stroke-width="0.4"/><rect x="262.1" y="342.6" width="16" height="186.3" fill="#ffc000"/><path d="M317.2 528.9 L322.8 525.2 L322.8 340.2 L317.2 343.9z" fill="#a67c00" stroke="#a67c00" stroke-width="0.4"/><path d="M301.8 344.5 L306.8 340.2 L322.8 340.2 L317.8 344.5z" fill="#c49300" stroke="#c49300" stroke-width="0.4"/><rect x="301.8" y="343.9" width="16" height="185.0" fill="#ffc000"/><path d="M356.9 528.9 L362.5 525.2 L362.5 386.4 L356.9 390.1z" fill="#a67c00" stroke="#a67c00" stroke-width="0.4"/><path d="M341.5 390.7 L346.5 386.4 L362.5 386.4 L357.5 390.7z" fill="#c49300" stroke="#c49300" stroke-width="0.4"/><rect x="341.5" y="390.1" width="16" height="138.8" fill="#ffc000"/><path d="M396.6 528.9 L402.2 525.2 L402.2 401.8 L396.6 405.5z" fill="#a67c00" stroke="#a67c00" stroke-width="0.4"/><path d="M381.2 406.1 L386.2 401.8 L402.2 401.8 L397.2 406.1z" fill="#c49300" stroke="#c49300" stroke-width="0.4"/><rect x="381.2" y="405.5" width="16" height="123.4" fill="#ffc000"/><path d="M436.3 528.9 L441.9 525.2 L441.9 432.7 L436.3 436.4z" fill="#a67c00" stroke="#a67c00" stroke-width="0.4"/><path d="M420.9 437.0 L425.9 432.7 L441.9 432.7 L436.9 437.0z" fill="#c49300" stroke="#c49300" stroke-width="0.4"/><rect x="420.9" y="436.4" width="16" height="92.5" fill="#ffc000"/><path d="M476.0 528.9 L481.6 525.2 L481.6 451.9 L476.0 455.6z" fill="#a67c00" stroke="#a67c00" stroke-width="0.4"/><path d="M460.6 456.2 L465.6 451.9 L481.6 451.9 L476.6 456.2z" fill="#c49300" stroke="#c49300" stroke-width="0.4"/><rect x="460.6" y="455.6" width="16" height="73.3" fill="#ffc000"/><path d="M515.7 528.9 L521.3 525.2 L521.3 460.1 L515.7 463.8z" fill="#a67c00" stroke="#a67c00" stroke-width="0.4"/><path d="M500.3 464.4 L505.3 460.1 L521.3 460.1 L516.3 464.4z" fill="#c49300" stroke="#c49300" stroke-width="0.4"/><rect x="500.3" y="463.8" width="16" height="65.1" fill="#ffc000"/><path d="M555.4 528.9 L561.0 525.2 L561.0 468.6 L555.4 472.3z" fill="#a67c00" stroke="#a67c00" stroke-width="0.4"/><path d="M540.0 472.9 L545.0 468.6 L561.0 468.6 L556.0 472.9z" fill="#c49300" stroke="#c49300" stroke-width="0.4"/><rect x="540.0" y="472.3" width="16" height="56.6" fill="#ffc000"/><path d="M595.1 528.9 L600.7 525.2 L600.7 475.9 L595.1 479.6z" fill="#a67c00" stroke="#a67c00" stroke-width="0.4"/><path d="M579.7 480.2 L584.7 475.9 L600.7 475.9 L595.7 480.2z" fill="#c49300" stroke="#c49300" stroke-width="0.4"/><rect x="579.7" y="479.6" width="16" height="49.3" fill="#ffc000"/><path d="M634.8 528.9 L640.4 525.2 L640.4 514.3 L634.8 518.0z" fill="#a67c00" stroke="#a67c00" stroke-width="0.4"/><path d="M619.4 518.6 L624.4 514.3 L640.4 514.3 L635.4 518.6z" fill="#c49300" stroke="#c49300" stroke-width="0.4"/><rect x="619.4" y="518.0" width="16" height="10.9" fill="#ffc000"/><path d="M184.5 539.3 L190.1 535.6 L190.1 483.1 L184.5 486.8z" fill="#7b7b7b" stroke="#7b7b7b" stroke-width="0.4"/><path d="M169.1 487.4 L174.1 483.1 L190.1 483.1 L185.1 487.4z" fill="#8c8c8c" stroke="#8c8c8c" stroke-width="0.4"/><rect x="169.1" y="486.8" width="16" height="52.5" fill="#a5a5a5"/><path d="M224.2 539.3 L229.8 535.6 L229.8 482.8 L224.2 486.5z" fill="#7b7b7b" stroke="#7b7b7b" stroke-width="0.4"/><path d="M208.8 487.1 L213.8 482.8 L229.8 482.8 L224.8 487.1z" fill="#8c8c8c" stroke="#8c8c8c" stroke-width="0.4"/><rect x="208.8" y="486.5" width="16" height="52.8" fill="#a5a5a5"/><path d="M263.9 539.3 L269.5 535.6 L269.5 483.2 L263.9 486.9z" fill="#7b7b7b" stroke="#7b7b7b" stroke-width="0.4"/><path d="M248.5 487.5 L253.5 483.2 L269.5 483.2 L264.5 487.5z" fill="#8c8c8c" stroke="#8c8c8c" stroke-width="0.4"/><rect x="248.5" y="486.9" width="16" height="52.4" fill="#a5a5a5"/><path d="M303.6 539.3 L309.2 535.6 L309.2 483.8 L303.6 487.5z" fill="#7b7b7b" stroke="#7b7b7b" stroke-width="0.4"/><path d="M288.2 488.1 L293.2 483.8 L309.2 483.8 L304.2 488.1z" fill="#8c8c8c" stroke="#8c8c8c" stroke-width="0.4"/><rect x="288.2" y="487.5" width="16" height="51.8" fill="#a5a5a5"/><path d="M343.3 539.3 L348.9 535.6 L348.9 489.0 L343.3 492.7z" fill="#7b7b7b" stroke="#7b7b7b" stroke-width="0.4"/><path d="M327.9 493.3 L332.9 489.0 L348.9 489.0 L343.9 493.3z" fill="#8c8c8c" stroke="#8c8c8c" stroke-width="0.4"/><rect x="327.9" y="492.7" width="16" height="46.6" fill="#a5a5a5"/><path d="M383.0 539.3 L388.6 535.6 L388.6 493.3 L383.0 497.0z" fill="#7b7b7b" stroke="#7b7b7b" stroke-width="0.4"/><path d="M367.6 497.6 L372.6 493.3 L388.6 493.3 L383.6 497.6z" fill="#8c8c8c" stroke="#8c8c8c" stroke-width="0.4"/><rect x="367.6" y="497.0" width="16" height="42.3" fill="#a5a5a5"/><path d="M422.7 539.3 L428.3 535.6 L428.3 498.0 L422.7 501.7z" fill="#7b7b7b" stroke="#7b7b7b" stroke-width="0.4"/><path d="M407.3 502.3 L412.3 498.0 L428.3 498.0 L423.3 502.3z" fill="#8c8c8c" stroke="#8c8c8c" stroke-width="0.4"/><rect x="407.3" y="501.7" width="16" height="37.6" fill="#a5a5a5"/><path d="M462.4 539.3 L468.0 535.6 L468.0 498.3 L462.4 502.0z" fill="#7b7b7b" stroke="#7b7b7b" stroke-width="0.4"/><path d="M447.0 502.6 L452.0 498.3 L468.0 498.3 L463.0 502.6z" fill="#8c8c8c" stroke="#8c8c8c" stroke-width="0.4"/><rect x="447.0" y="502.0" width="16" height="37.3" fill="#a5a5a5"/><path d="M502.1 539.3 L507.7 535.6 L507.7 505.8 L502.1 509.5z" fill="#7b7b7b" stroke="#7b7b7b" stroke-width="0.4"/><path d="M486.7 510.1 L491.7 505.8 L507.7 505.8 L502.7 510.1z" fill="#8c8c8c" stroke="#8c8c8c" stroke-width="0.4"/><rect x="486.7" y="509.5" width="16" height="29.8" fill="#a5a5a5"/><path d="M541.8 539.3 L547.4 535.6 L547.4 511.3 L541.8 515.0z" fill="#7b7b7b" stroke="#7b7b7b" stroke-width="0.4"/><path d="M526.4 515.6 L531.4 511.3 L547.4 511.3 L542.4 515.6z" fill="#8c8c8c" stroke="#8c8c8c" stroke-width="0.4"/><rect x="526.4" y="515.0" width="16" height="24.3" fill="#a5a5a5"/><path d="M581.5 539.3 L587.1 535.6 L587.1 518.0 L581.5 521.7z" fill="#7b7b7b" stroke="#7b7b7b" stroke-width="0.4"/><path d="M566.1 522.3 L571.1 518.0 L587.1 518.0 L582.1 522.3z" fill="#8c8c8c" stroke="#8c8c8c" stroke-width="0.4"/><rect x="566.1" y="521.7" width="16" height="17.6" fill="#a5a5a5"/><path d="M621.2 539.3 L626.8 535.6 L626.8 521.6 L621.2 525.3z" fill="#7b7b7b" stroke="#7b7b7b" stroke-width="0.4"/><path d="M605.8 525.9 L610.8 521.6 L626.8 521.6 L621.8 525.9z" fill="#8c8c8c" stroke="#8c8c8c" stroke-width="0.4"/><rect x="605.8" y="525.3" width="16" height="14.0" fill="#a5a5a5"/><path d="M171.0 549.6 L176.6 545.9 L176.6 491.7 L171.0 495.4z" fill="#b35b22" stroke="#b35b22" stroke-width="0.4"/><path d="M155.6 496.0 L160.6 491.7 L176.6 491.7 L171.6 496.0z" fill="#c9692a" stroke="#c9692a" stroke-width="0.4"/><rect x="155.6" y="495.4" width="16" height="54.2" fill="#ed7d31"/><path d="M210.7 549.6 L216.3 545.9 L216.3 495.6 L210.7 499.3z" fill="#b35b22" stroke="#b35b22" stroke-width="0.4"/><path d="M195.3 499.9 L200.3 495.6 L216.3 495.6 L211.3 499.9z" fill="#c9692a" stroke="#c9692a" stroke-width="0.4"/><rect x="195.3" y="499.3" width="16" height="50.3" fill="#ed7d31"/><path d="M250.4 549.6 L256.0 545.9 L256.0 497.9 L250.4 501.6z" fill="#b35b22" stroke="#b35b22" stroke-width="0.4"/><path d="M235.0 502.2 L240.0 497.9 L256.0 497.9 L251.0 502.2z" fill="#c9692a" stroke="#c9692a" stroke-width="0.4"/><rect x="235.0" y="501.6" width="16" height="48.0" fill="#ed7d31"/><path d="M290.1 549.6 L295.7 545.9 L295.7 499.3 L290.1 503.0z" fill="#b35b22" stroke="#b35b22" stroke-width="0.4"/><path d="M274.7 503.6 L279.7 499.3 L295.7 499.3 L290.7 503.6z" fill="#c9692a" stroke="#c9692a" stroke-width="0.4"/><rect x="274.7" y="503.0" width="16" height="46.6" fill="#ed7d31"/><path d="M329.8 549.6 L335.4 545.9 L335.4 500.3 L329.8 504.0z" fill="#b35b22" stroke="#b35b22" stroke-width="0.4"/><path d="M314.4 504.6 L319.4 500.3 L335.4 500.3 L330.4 504.6z" fill="#c9692a" stroke="#c9692a" stroke-width="0.4"/><rect x="314.4" y="504.0" width="16" height="45.6" fill="#ed7d31"/><path d="M369.5 549.6 L375.1 545.9 L375.1 503.9 L369.5 507.6z" fill="#b35b22" stroke="#b35b22" stroke-width="0.4"/><path d="M354.1 508.2 L359.1 503.9 L375.1 503.9 L370.1 508.2z" fill="#c9692a" stroke="#c9692a" stroke-width="0.4"/><rect x="354.1" y="507.6" width="16" height="42.0" fill="#ed7d31"/><path d="M409.2 549.6 L414.8 545.9 L414.8 505.6 L409.2 509.3z" fill="#b35b22" stroke="#b35b22" stroke-width="0.4"/><path d="M393.8 509.9 L398.8 505.6 L414.8 505.6 L409.8 509.9z" fill="#c9692a" stroke="#c9692a" stroke-width="0.4"/><rect x="393.8" y="509.3" width="16" height="40.3" fill="#ed7d31"/><path d="M448.9 549.6 L454.5 545.9 L454.5 507.4 L448.9 511.1z" fill="#b35b22" stroke="#b35b22" stroke-width="0.4"/><path d="M433.5 511.7 L438.5 507.4 L454.5 507.4 L449.5 511.7z" fill="#c9692a" stroke="#c9692a" stroke-width="0.4"/><rect x="433.5" y="511.1" width="16" height="38.5" fill="#ed7d31"/><path d="M488.6 549.6 L494.2 545.9 L494.2 508.3 L488.6 512.0z" fill="#b35b22" stroke="#b35b22" stroke-width="0.4"/><path d="M473.2 512.6 L478.2 508.3 L494.2 508.3 L489.2 512.6z" fill="#c9692a" stroke="#c9692a" stroke-width="0.4"/><rect x="473.2" y="512.0" width="16" height="37.6" fill="#ed7d31"/><path d="M528.3 549.6 L533.9 545.9 L533.9 514.5 L528.3 518.2z" fill="#b35b22" stroke="#b35b22" stroke-width="0.4"/><path d="M512.9 518.8 L517.9 514.5 L533.9 514.5 L528.9 518.8z" fill="#c9692a" stroke="#c9692a" stroke-width="0.4"/><rect x="512.9" y="518.2" width="16" height="31.4" fill="#ed7d31"/><path d="M568.0 549.6 L573.6 545.9 L573.6 528.8 L568.0 532.5z" fill="#b35b22" stroke="#b35b22" stroke-width="0.4"/><path d="M552.6 533.1 L557.6 528.8 L573.6 528.8 L568.6 533.1z" fill="#c9692a" stroke="#c9692a" stroke-width="0.4"/><rect x="552.6" y="532.5" width="16" height="17.1" fill="#ed7d31"/><path d="M607.7 549.6 L613.3 545.9 L613.3 533.2 L607.7 536.9z" fill="#b35b22" stroke="#b35b22" stroke-width="0.4"/><path d="M592.3 537.5 L597.3 533.2 L613.3 533.2 L608.3 537.5z" fill="#c9692a" stroke="#c9692a" stroke-width="0.4"/><rect x="592.3" y="536.9" width="16" height="12.7" fill="#ed7d31"/><path d="M157.4 560.0 L163.0 556.3 L163.0 516.1 L157.4 519.8z" fill="#2f5597" stroke="#2f5597" stroke-width="0.4"/><path d="M142.0 520.4 L147.0 516.1 L163.0 516.1 L158.0 520.4z" fill="#3a62ad" stroke="#3a62ad" stroke-width="0.4"/><rect x="142.0" y="519.8" width="16" height="40.2" fill="#4472c4"/><path d="M197.1 560.0 L202.7 556.3 L202.7 522.7 L197.1 526.4z" fill="#2f5597" stroke="#2f5597" stroke-width="0.4"/><path d="M181.7 527.0 L186.7 522.7 L202.7 522.7 L197.7 527.0z" fill="#3a62ad" stroke="#3a62ad" stroke-width="0.4"/><rect x="181.7" y="526.4" width="16" height="33.6" fill="#4472c4"/><path d="M236.8 560.0 L242.4 556.3 L242.4 523.7 L236.8 527.4z" fill="#2f5597" stroke="#2f5597" stroke-width="0.4"/><path d="M221.4 528.0 L226.4 523.7 L242.4 523.7 L237.4 528.0z" fill="#3a62ad" stroke="#3a62ad" stroke-width="0.4"/><rect x="221.4" y="527.4" width="16" height="32.6" fill="#4472c4"/><path d="M276.5 560.0 L282.1 556.3 L282.1 528.0 L276.5 531.7z" fill="#2f5597" stroke="#2f5597" stroke-width="0.4"/><path d="M261.1 532.3 L266.1 528.0 L282.1 528.0 L277.1 532.3z" fill="#3a62ad" stroke="#3a62ad" stroke-width="0.4"/><rect x="261.1" y="531.7" width="16" height="28.3" fill="#4472c4"/><path d="M316.2 560.0 L321.8 556.3 L321.8 534.3 L316.2 538.0z" fill="#2f5597" stroke="#2f5597" stroke-width="0.4"/><path d="M300.8 538.6 L305.8 534.3 L321.8 534.3 L316.8 538.6z" fill="#3a62ad" stroke="#3a62ad" stroke-width="0.4"/><rect x="300.8" y="538.0" width="16" height="22.0" fill="#4472c4"/><path d="M355.9 560.0 L361.5 556.3 L361.5 534.9 L355.9 538.6z" fill="#2f5597" stroke="#2f5597" stroke-width="0.4"/><path d="M340.5 539.2 L345.5 534.9 L361.5 534.9 L356.5 539.2z" fill="#3a62ad" stroke="#3a62ad" stroke-width="0.4"/><rect x="340.5" y="538.6" width="16" height="21.4" fill="#4472c4"/><path d="M395.6 560.0 L401.2 556.3 L401.2 536.3 L395.6 540.0z" fill="#2f5597" stroke="#2f5597" stroke-width="0.4"/><path d="M380.2 540.6 L385.2 536.3 L401.2 536.3 L396.2 540.6z" fill="#3a62ad" stroke="#3a62ad" stroke-width="0.4"/><rect x="380.2" y="540.0" width="16" height="20.0" fill="#4472c4"/><path d="M435.3 560.0 L440.9 556.3 L440.9 543.4 L435.3 547.1z" fill="#2f5597" stroke="#2f5597" stroke-width="0.4"/><path d="M419.9 547.7 L424.9 543.4 L440.9 543.4 L435.9 547.7z" fill="#3a62ad" stroke="#3a62ad" stroke-width="0.4"/><rect x="419.9" y="547.1" width="16" height="12.9" fill="#4472c4"/><path d="M475.0 560.0 L480.6 556.3 L480.6 543.0 L475.0 546.7z" fill="#2f5597" stroke="#2f5597" stroke-width="0.4"/><path d="M459.6 547.3 L464.6 543.0 L480.6 543.0 L475.6 547.3z" fill="#3a62ad" stroke="#3a62ad" stroke-width="0.4"/><rect x="459.6" y="546.7" width="16" height="13.3" fill="#4472c4"/><path d="M514.7 560.0 L520.3 556.3 L520.3 543.8 L514.7 547.5z" fill="#2f5597" stroke="#2f5597" stroke-width="0.4"/><path d="M499.3 548.1 L504.3 543.8 L520.3 543.8 L515.3 548.1z" fill="#3a62ad" stroke="#3a62ad" stroke-width="0.4"/><rect x="499.3" y="547.5" width="16" height="12.5" fill="#4472c4"/><path d="M554.4 560.0 L560.0 556.3 L560.0 552.0 L554.4 555.7z" fill="#2f5597" stroke="#2f5597" stroke-width="0.4"/><path d="M539.0 556.3 L544.0 552.0 L560.0 552.0 L555.0 556.3z" fill="#3a62ad" stroke="#3a62ad" stroke-width="0.4"/><rect x="539.0" y="555.7" width="16" height="4.3" fill="#4472c4"/><path d="M594.1 560.0 L599.7 556.3 L599.7 552.3 L594.1 556.0z" fill="#2f5597" stroke="#2f5597" stroke-width="0.4"/><path d="M578.7 556.6 L583.7 552.3 L599.7 552.3 L594.7 556.6z" fill="#3a62ad" stroke="#3a62ad" stroke-width="0.4"/><rect x="578.7" y="556.0" width="16" height="4.0" fill="#4472c4"/><text x="146.0" y="582.3" font-size="10.7" fill="#595959" stroke="#595959" stroke-width="0.12" text-anchor="middle">1月</text><text x="185.7" y="582.3" font-size="10.7" fill="#595959" stroke="#595959" stroke-width="0.12" text-anchor="middle">2月</text><text x="225.4" y="582.3" font-size="10.7" fill="#595959" stroke="#595959" stroke-width="0.12" text-anchor="middle">3月</text><text x="265.1" y="582.3" font-size="10.7" fill="#595959" stroke="#595959" stroke-width="0.12" text-anchor="middle">4月</text><text x="304.8" y="582.3" font-size="10.7" fill="#595959" stroke="#595959" stroke-width="0.12" text-anchor="middle">5月</text><text x="344.5" y="582.3" font-size="10.7" fill="#595959" stroke="#595959" stroke-width="0.12" text-anchor="middle">6月</text><text x="384.2" y="582.3" font-size="10.7" fill="#595959" stroke="#595959" stroke-width="0.12" text-anchor="middle">7月</text><text x="423.9" y="582.3" font-size="10.7" fill="#595959" stroke="#595959" stroke-width="0.12" text-anchor="middle">8月</text><text x="463.6" y="582.3" font-size="10.7" fill="#595959" stroke="#595959" stroke-width="0.12" text-anchor="middle">9月</text><text x="503.3" y="582.3" font-size="10.7" fill="#595959" stroke="#595959" stroke-width="0.12" text-anchor="middle">10月</text><text x="543.0" y="582.3" font-size="10.7" fill="#595959" stroke="#595959" stroke-width="0.12" text-anchor="middle">11月</text><text x="582.7" y="582.3" font-size="10.7" fill="#595959" stroke="#595959" stroke-width="0.12" text-anchor="middle">12月</text><text x="650" y="541.6" font-size="10.7" fill="#595959" stroke="#595959" stroke-width="0.22">2012</text><text x="622.5" y="562.5" font-size="10.7" fill="#595959" stroke="#595959" stroke-width="0.22">2010</text><rect x="434" y="263.2" width="6" height="6" fill="#4472c4"/><text x="443.2" y="270" font-size="10.7" fill="#595959" stroke="#595959" stroke-width="0.22">2010</text><rect x="476.4" y="263.2" width="6" height="6" fill="#ed7d31"/><text x="485.59999999999997" y="270" font-size="10.7" fill="#595959" stroke="#595959" stroke-width="0.22">2011</text><rect x="518.7" y="263.2" width="6" height="6" fill="#a5a5a5"/><text x="527.9000000000001" y="270" font-size="10.7" fill="#595959" stroke="#595959" stroke-width="0.22">2012</text><rect x="560.5" y="263.2" width="6" height="6" fill="#ffc000"/><text x="569.7" y="270" font-size="10.7" fill="#595959" stroke="#595959" stroke-width="0.22">2013</text><circle cx="88.2" cy="231.1" r="4.6" fill="#fff" stroke="#858585" stroke-width="1.7"/><circle cx="394.7" cy="231.1" r="4.6" fill="#fff" stroke="#858585" stroke-width="1.7"/><circle cx="701.2" cy="231.1" r="4.6" fill="#fff" stroke="#858585" stroke-width="1.7"/><circle cx="88.2" cy="443.2" r="4.6" fill="#fff" stroke="#858585" stroke-width="1.7"/><circle cx="701.2" cy="443.2" r="4.6" fill="#fff" stroke="#858585" stroke-width="1.7"/><circle cx="88.2" cy="655.5" r="4.6" fill="#fff" stroke="#858585" stroke-width="1.7"/><circle cx="394.7" cy="655.5" r="4.6" fill="#fff" stroke="#858585" stroke-width="1.7"/><circle cx="701.2" cy="655.5" r="4.6" fill="#fff" stroke="#858585" stroke-width="1.7"/></svg>
<div class="r" style="left:831px;top:170px;width:279px;height:588px;background:#e6e6e6"></div>
<div class="r" style="left:831px;top:170px;width:1px;height:588px;background:#d4d4d4"></div>
<div class="r" style="left:1106px;top:135px;width:1px;height:623px;background:#c8c8c8"></div>
<div class="r" style="left:1107px;top:135px;width:3px;height:623px;background:#f3f3f3"></div>
<div class="t" style="left:844.5px;top:188.2px;font-size:21px;line-height:29px;color:#217346;font-weight:normal;">设置图表区格式</div>
<svg class="r" style="left:1042px;top:197px" width="10" height="6"><path d="M0.5 0.5h9l-4.5 4.5z" fill="#777"/></svg>
<svg class="r" style="left:1081px;top:195px" width="12" height="12"><path d="M1 1 L11 11 M11 1 L1 11" stroke="#555" stroke-width="1.4"/></svg>
<div class="t" style="left:848px;top:226.0px;font-size:12px;line-height:17px;color:#262626;font-weight:bold;">图表选项</div>
<svg class="r" style="left:900px;top:231px" width="10" height="6"><path d="M0.5 0.5h9l-4.5 4.5z" fill="#555"/></svg>
<div class="t" style="left:926.5px;top:226.0px;font-size:12px;line-height:17px;color:#262626;font-weight:normal;">文本选项</div>
<svg class="r" style="left:840px;top:245px" width="110" height="35"><path d="M9.5 20.8 L17.7 12.8 L25.8 20.8 L17.7 28.8z" fill="#fff" stroke="#217346" stroke-width="1.4"/><path d="M17.7 12.8 V10.5 q0 -2 1.2 -1 q1 1 -1 3 V17" fill="none" stroke="#217346" stroke-width="1.1"/><circle cx="17.8" cy="17.4" r="1.1" fill="#217346"/><path d="M23.5 16 q5 1 6.5 4.5 l-3.6 6.5 l-0.6 -6z" fill="#217346"/><path d="M55 9.5 L63.8 16.5 L60.5 26.3 H49.5 L46.2 16.5z" fill="#fff" stroke="#707070" stroke-width="1.2"/><path d="M49.5 26.5 H60.5" stroke="#666" stroke-width="1.6"/><path d="M49 28 h12 l-1 3 h-10z" fill="#dedede" opacity="0.7"/><rect x="87" y="15.4" width="14.3" height="14.1" rx="1.5" fill="#6b6b6b"/><path d="M94.15 17 v11 M88.5 22.45 h11.5" stroke="#e8e8e8" stroke-width="0.9"/><path d="M82.3 17 v12 M80.8 17 h3 M80.8 29 h3 M88 11.7 h13 M88 10.2 v3 M101 10.2 v3" stroke="#7a7a7a" stroke-width="1"/></svg>
<svg class="r" style="left:845px;top:285px" width="252" height="8"><path d="M0 6.5 H9 L14 1.5 L19 6.5 H252" fill="none" stroke="#d0d0d0"/></svg>
<div class="r" style="left:1082px;top:296px;width:14px;height:450px;background:#dedede"></div>
<div class="r" style="left:1082px;top:296px;width:14px;height:16px;background:#fff;border:1px solid #d4d4d4;box-sizing:border-box"></div>
<svg class="r" style="left:1085px;top:301px" width="9" height="6"><path d="M0.5 5 l4 -4 l4 4z" fill="#555"/></svg>
<div class="r" style="left:1082px;top:313px;width:14px;height:282px;background:#fff;border:1px solid #d4d4d4;box-sizing:border-box"></div>
<div class="r" style="left:1082px;top:733px;width:14px;height:14px;background:#fff;border:1px solid #d4d4d4;box-sizing:border-box"></div>
<svg class="r" style="left:1085px;top:738px" width="9" height="6"><path d="M0.5 1 l4 4 l4 -4z" fill="#555"/></svg>
<svg class="r" style="left:849px;top:299.5px" width="8" height="8"><path d="M7 1 V7 H1z" fill="#444"/></svg>
<div class="t" style="left:864px;top:295.9px;font-size:12px;line-height:17px;color:#217346;font-weight:bold;">填充</div>
<svg class="r" style="left:865px;top:325.1px" width="12" height="12"><circle cx="6" cy="6" r="5.2" fill="#fff" stroke="#c6c6c6" stroke-width="1"/></svg>
<div class="t" style="left:881px;top:322.6px;font-size:12px;line-height:17px;color:#404040;font-weight:normal;">无填充(<u>N</u>)</div>
<svg class="r" style="left:865px;top:348.7px" width="12" height="12"><circle cx="6" cy="6" r="5.2" fill="#fff" stroke="#c6c6c6" stroke-width="1"/></svg>
<div class="t" style="left:881px;top:346.2px;font-size:12px;line-height:17px;color:#404040;font-weight:normal;">纯色填充(<u>S</u>)</div>
<svg class="r" style="left:865px;top:372px" width="12" height="12"><circle cx="6" cy="6" r="5.2" fill="#fff" stroke="#c6c6c6" stroke-width="1"/></svg>
<div class="t" style="left:881px;top:369.5px;font-size:12px;line-height:17px;color:#404040;font-weight:normal;">渐变填充(<u>G</u>)</div>
<svg class="r" style="left:865px;top:395.4px" width="12" height="12"><circle cx="6" cy="6" r="5.2" fill="#fff" stroke="#c6c6c6" stroke-width="1"/></svg>
<div class="t" style="left:881px;top:392.9px;font-size:12px;line-height:17px;color:#404040;font-weight:normal;">图片或纹理填充(<u>P</u>)</div>
<svg class="r" style="left:865px;top:419px" width="12" height="12"><circle cx="6" cy="6" r="5.2" fill="#fff" stroke="#c6c6c6" stroke-width="1"/></svg>
<div class="t" style="left:881px;top:416.5px;font-size:12px;line-height:17px;color:#404040;font-weight:normal;">图案填充(<u>A</u>)</div>
<svg class="r" style="left:865px;top:442.2px" width="12" height="12"><circle cx="6" cy="6" r="5.2" fill="#fff" stroke="#c6c6c6" stroke-width="1"/><circle cx="6" cy="6" r="2.3" fill="#555"/></svg>
<div class="t" style="left:881px;top:439.7px;font-size:12px;line-height:17px;color:#404040;font-weight:normal;">自动(<u>U</u>)</div>
<div class="t" style="left:871.5px;top:472.9px;font-size:12px;line-height:17px;color:#404040;font-weight:normal;">颜色(<u>C</u>)</div>
<div class="r" style="left:1039px;top:470px;width:40px;height:24px;background:#fff;border:1px solid #c6c6c6;box-sizing:border-box"></div>
<svg class="r" style="left:1046px;top:474px" width="30" height="16"><path d="M2 8 l5 -5 l5 5 l-5 5z" fill="#fff" stroke="#555"/><path d="M5 3 q2 -3 4 0" fill="none" stroke="#555"/><path d="M11 7 q3 1 2 5" fill="none" stroke="#2f6fc0" stroke-width="1.3"/><path d="M21 6.5 h7 l-3.5 3.5z" fill="#555"/></svg>
<svg class="r" style="left:849px;top:510px" width="8" height="8"><path d="M7 1 V7 H1z" fill="#444"/></svg>
<div class="t" style="left:864px;top:506.3px;font-size:12px;line-height:17px;color:#217346;font-weight:bold;">边框</div>
<svg class="r" style="left:865px;top:535px" width="12" height="12"><circle cx="6" cy="6" r="5.2" fill="#fff" stroke="#c6c6c6" stroke-width="1"/></svg>
<div class="t" style="left:881px;top:532.5px;font-size:12px;line-height:17px;color:#404040;font-weight:normal;">无线条(<u>N</u>)</div>
<svg class="r" style="left:865px;top:558.6px" width="12" height="12"><circle cx="6" cy="6" r="5.2" fill="#fff" stroke="#c6c6c6" stroke-width="1"/></svg>
<div class="t" style="left:881px;top:556.1px;font-size:12px;line-height:17px;color:#404040;font-weight:normal;">实线(<u>S</u>)</div>
<svg class="r" style="left:865px;top:581.7px" width="12" height="12"><circle cx="6" cy="6" r="5.2" fill="#fff" stroke="#c6c6c6" stroke-width="1"/></svg>
<div class="t" style="left:881px;top:579.2px;font-size:12px;line-height:17px;color:#404040;font-weight:normal;">渐变线(<u>G</u>)</div>
<svg class="r" style="left:865px;top:605.3px" width="12" height="12"><circle cx="6" cy="6" r="5.2" fill="#fff" stroke="#c6c6c6" stroke-width="1"/><circle cx="6" cy="6" r="2.3" fill="#555"/></svg>
<div class="t" style="left:881px;top:602.8px;font-size:12px;line-height:17px;color:#404040;font-weight:normal;">自动(<u>U</u>)</div>
<div class="t" style="left:871.5px;top:635.8px;font-size:12px;line-height:17px;color:#404040;font-weight:normal;">颜色(<u>C</u>)</div>
<div class="r" style="left:1039px;top:633px;width:40px;height:24px;background:#fff;border:1px solid #c6c6c6;box-sizing:border-box"></div>
<svg class="r" style="left:1044px;top:637px" width="32" height="16"><rect x="3.5" y="1.5" width="11" height="10" fill="#fff" stroke="#777"/><path d="M8 10 l8 -9" stroke="#3a6fc5" stroke-width="1.8"/><rect x="2" y="13" width="16" height="2.5" fill="#d8d8d8"/><path d="M23 6.5 h7 l-3.5 3.5z" fill="#555"/></svg>
<div class="t" style="left:871.5px;top:663.8px;font-size:12px;line-height:17px;color:#404040;font-weight:normal;">透明度(<u>T</u>)</div>
<div class="r" style="left:930px;top:667px;width:3px;height:10px;background:#777"></div>
<div class="r" style="left:933px;top:672px;width:44px;height:1px;background:#aaa"></div>
<div class="r" style="left:981px;top:662px;width:98px;height:22px;background:#fff;border:1px solid #c6c6c6;box-sizing:border-box"></div>
<div class="t" style="left:987px;top:664.0px;font-size:12.5px;line-height:18px;color:#444;font-weight:normal;">0%</div>
<div class="t" style="left:871.5px;top:690.5px;font-size:12px;line-height:17px;color:#404040;font-weight:normal;">宽度(<u>W</u>)</div>
<div class="r" style="left:981px;top:689px;width:98px;height:22px;background:#fff;border:1px solid #c6c6c6;box-sizing:border-box"></div>
<div class="t" style="left:987px;top:690.5px;font-size:12.5px;line-height:18px;color:#444;font-weight:normal;">0.75 磅</div>
<svg class="r" style="left:1067px;top:665px" width="8" height="44"><path d="M0.5 5 l3.5 -3.5 l3.5 3.5z M0.5 12 l3.5 3.5 l3.5 -3.5z M0.5 32 l3.5 -3.5 l3.5 3.5z M0.5 39 l3.5 3.5 l3.5 -3.5z" fill="#555"/></svg>
<div class="t" style="left:871.5px;top:718.1px;font-size:12px;line-height:17px;color:#404040;font-weight:normal;">复合类型(<u>C</u>)</div>
<div class="r" style="left:1039px;top:715px;width:40px;height:24px;background:#fff;border:1px solid #c6c6c6;box-sizing:border-box"></div>
<svg class="r" style="left:1044px;top:719px" width="32" height="16"><rect x="2" y="3" width="16" height="2.2" fill="#3a6fc5"/><rect x="2" y="7" width="16" height="2.2" fill="#3a6fc5"/><rect x="2" y="11" width="16" height="1.5" fill="#999"/><path d="M23 6.5 h7 l-3.5 3.5z" fill="#555"/></svg>
<div class="r" style="left:1039px;top:744px;width:40px;height:14px;background:#fff;border:1px solid #c6c6c6;box-sizing:border-box"></div>
<div class="r" style="left:0px;top:0px;width:1px;height:758px;background:#111"></div>
</body></html>
